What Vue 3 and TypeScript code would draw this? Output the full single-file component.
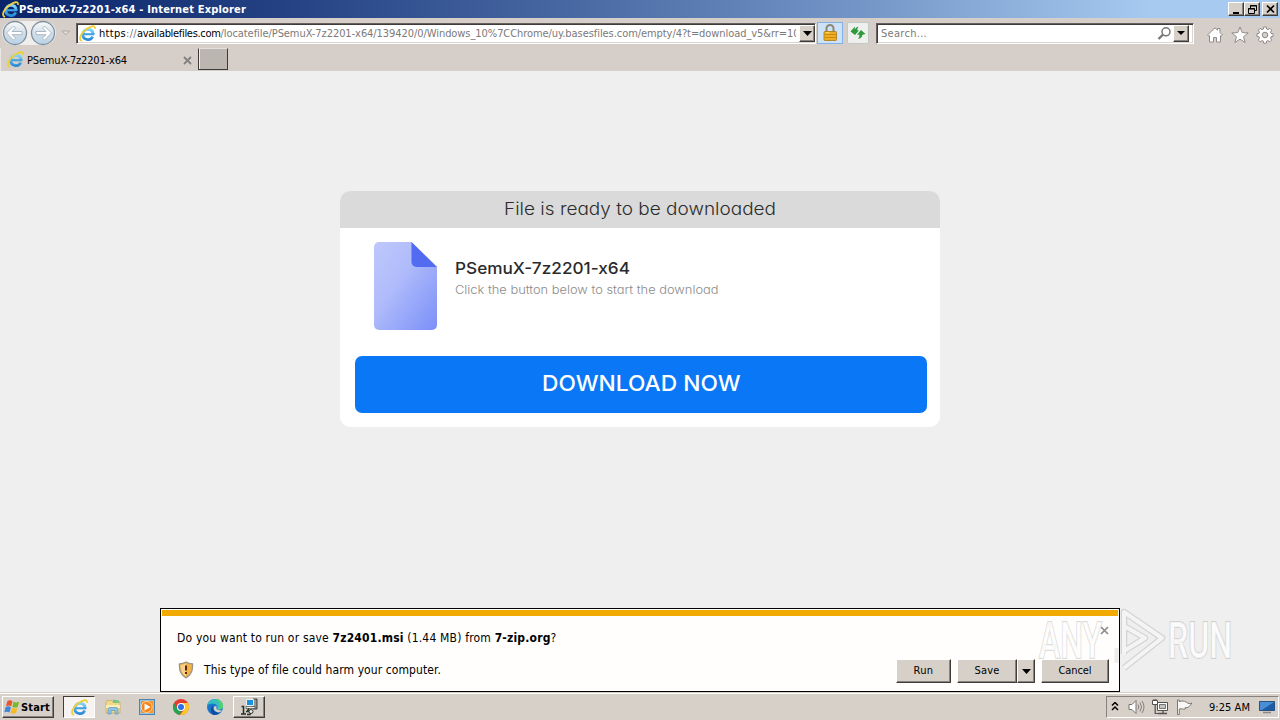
<script setup lang="ts">
import { ref, type Directive } from 'vue'

// Makes a label occupy the given width in pixels, by spreading its letters
// or, with the "wide" modifier, by stretching the letters themselves.
const vFit: Directive<HTMLElement, number, 'wide'> = {
  mounted(el, { value, modifiers }) {
    const count = (el.textContent ?? '').length
    const natural = el.getBoundingClientRect().width
    if (modifiers.wide) {
      el.style.transform = `scaleX(${value / natural})`
      el.style.marginRight = `${value - natural}px`
    } else {
      el.style.letterSpacing = `${(value - natural) / count}px`
    }
  },
}

const fileName = ref('PSemuX-7z2201-x64')
const search = ref('Search...')
const clock = ref('9:25 AM')
</script>

<template>
  <div class="screen">
    <svg class="defs" width="0" height="0">
      <defs>
        <linearGradient id="ieBlue" x1="0" y1="0" x2="0" y2="1">
          <stop offset="0" stop-color="#7fd6fa" />
          <stop offset="1" stop-color="#2a8bd8" />
        </linearGradient>
        <linearGradient id="sheet" x1="0" y1="0" x2="1" y2="1">
          <stop offset="0" stop-color="#bfc8fc" />
          <stop offset="0.4" stop-color="#b0bcfb" />
          <stop offset="1" stop-color="#7b8ff8" />
        </linearGradient>
        <linearGradient id="orb" x1="0" y1="0" x2="0" y2="1">
          <stop offset="0" stop-color="#fafcfd" />
          <stop offset="0.5" stop-color="#d5dee6" />
          <stop offset="1" stop-color="#b9d3e8" />
        </linearGradient>
        <symbol id="ie" viewBox="0 0 16 16">
          <path d="M12.900 10.800C11.800 13.200 9.900 14 8 13.700c-2.800-.4-4.600-2.400-4.400-5.100C3.800 5.800 6 4 8.400 4c2.900 0 4.700 1.900 4.900 4.600" fill="none" stroke="url(#ieBlue)" stroke-width="2.600" />
          <path d="M4 8.700h10.500" stroke="#3fa3e6" stroke-width="2" />
          <path d="M2.900 14.900C-1 14 1.500 7.500 7.200 3.700 11 1.100 15.600-.4 15 3.600" fill="none" stroke="#efcf3c" stroke-width="1.700" />
        </symbol>
      </defs>
    </svg>

    <header class="titlebar">
      <svg class="i16" viewBox="0 0 16 16"><use href="#ie" /></svg>
      <b><span v-fit="227">{{ fileName }} - Internet Explorer</span></b>
      <div class="winbtns">
        <i class="raised"><svg width="13" height="11"><path d="M3 9h6" stroke="#000" stroke-width="2" /></svg></i>
        <i class="raised"><svg width="13" height="11"><path d="M4.500 4V1.500h6v5H9M4 2h7M2.500 4.500h6v5h-6zM2 5h7" fill="none" stroke="#000" /></svg></i>
        <i class="raised close"><svg width="13" height="11"><path d="M3 1.500l7 7M10 1.500l-7 7" stroke="#000" stroke-width="1.700" /></svg></i>
      </div>
    </header>

    <nav class="toolbar">
      <svg class="nav" width="72" height="28" viewBox="0 0 72 28">
        <rect x="2" y="2" width="54" height="24" rx="12" fill="#efeeed" />
        <g stroke="#7f91a0" stroke-width="1.300" fill="url(#orb)">
          <circle cx="15" cy="14" r="11.500" /><circle cx="43" cy="14" r="11.500" />
        </g>
        <g fill="#fff" stroke="#9fb3c2" stroke-width=".9">
          <path d="M6.500 14l7-7 2 2-3.500 3.500H22v3.200H12l3.500 3.500-2 2z" />
          <path d="M51.500 14l-7-7-2 2 3.500 3.500H36v3.200h10l-3.500 3.500 2 2z" />
        </g>
        <path d="M62 12h7.500L65.700 16z" fill="#dedbd8" stroke="#aaa6a2" stroke-width=".9" />
      </svg>
      <div class="field address">
        <svg class="i16" viewBox="0 0 16 16"><use href="#ie" /></svg>
        <div class="url"><span v-fit="38" class="dk">https<em>://</em></span><span v-fit="83.5" class="dk">availablefiles.com</span><span v-fit="579">/locatefile/{{ fileName }}/139420/0/Windows_10%7CChrome/uy.basesfiles.com/empty/4?t=download_v5&amp;rr=10</span></div>
        <i class="raised drop"><svg width="9" height="5"><path d="M0 0h9L4.500 5z" /></svg></i>
      </div>
      <div class="lock">
        <svg width="16" height="18" viewBox="0 0 16 18">
          <path d="M4.500 8V4.500a3.500 3.500 0 0 1 7 0V8" fill="none" stroke="#8d8873" stroke-width="2" />
          <rect x="2" y="7.500" width="12.500" height="9" rx=".8" fill="#eeae1f" stroke="#a87713" stroke-width=".8" />
          <path d="M3 10.500h11M3 13.500h11" stroke="#c98b13" /><path d="M3.500 8.700h4" stroke="#fbdc7b" />
        </svg>
      </div>
      <div class="refresh">
        <svg width="16" height="14" viewBox="0 0 16 14" fill="#2c9a3d">
          <path d="M.5 5.500L5 .500 4.700 3.500C5.500 2.500 6.500 1 8.500.8 7.300 2 7.300 3.500 7.500 4.500H9L5 9z" />
          <path d="M15.500 8L11 4 7 8.800h2.300c.2 1.500 0 2.700-1.300 4.200 2.500-.3 4-1.700 4.500-4.200z" />
        </svg>
      </div>
      <div class="field search">
        <span v-fit="46">{{ search }}</span>
        <svg width="15" height="15" viewBox="0 0 15 15"><circle cx="9" cy="5.800" r="4" fill="none" stroke="#777" stroke-width="1.500" /><path d="M6 8.700L1.500 13" stroke="#777" stroke-width="2.300" /></svg>
        <i class="raised drop"><svg width="8" height="4"><path d="M0 0h8L4 4z" /></svg></i>
      </div>
      <div class="tools">
        <svg width="18" height="18" viewBox="0 0 18 18"><path d="M1.500 9L9 1.800l2.500 2.300V2.500H14v4L16.500 9l-1.300 1.200-.7-.6V16h-4v-4.500h-3V16h-4V9.600l-.7.6z" /></svg>
        <svg width="18" height="18" viewBox="0 0 18 18"><path d="M9 1l2.200 5.600 6 .3-4.700 3.800 1.700 5.800L9 13.200l-5.200 3.300 1.700-5.800L.8 6.900l6-.3z" /></svg>
        <svg width="18" height="18" viewBox="0 0 18 18"><path fill-rule="evenodd" d="M7.700 1h2.600l.4 2.100 1.300.5 1.900-1.200 1.800 1.800-1.200 1.900.5 1.300 2.100.4v2.600l-2.100.4-.5 1.300 1.200 1.900-1.800 1.800-1.900-1.200-1.300.5-.4 2.100H7.700l-.4-2.100-1.300-.5-1.900 1.200L2.300 14l1.200-1.900-.5-1.300-2.100-.4V7.800L3 7.400l.5-1.300-1.200-1.900 1.800-1.800L6 3.600l1.300-.5zM9 6.200a2.800 2.800 0 1 0 0 5.600 2.800 2.800 0 0 0 0-5.600z" /></svg>
      </div>
    </nav>

    <div class="tabs">
      <div class="tab">
        <svg class="i16" viewBox="0 0 16 16"><use href="#ie" /></svg>
        <span v-fit="100">{{ fileName }}</span>
        <svg class="x" width="9" height="9"><path d="M1 1l7 7M8 1L1 8" stroke="#858180" stroke-width="1.800" /></svg>
      </div>
      <i class="newtab"></i>
    </div>

    <main class="page">
      <section class="card">
        <h1><span v-fit.wide="272">File is ready to be downloaded</span></h1>
        <div class="file">
          <svg width="63" height="88" viewBox="0 0 63 88">
            <path d="M5 0h32.500L63 25v58a5 5 0 0 1-5 5H5a5 5 0 0 1-5-5V5a5 5 0 0 1 5-5z" fill="url(#sheet)" />
            <path d="M37.500 0L63 25H42.500a5 5 0 0 1-5-5z" fill="#526bf1" />
          </svg>
          <div class="info">
            <h2><span v-fit.wide="175">{{ fileName }}</span></h2>
            <p><span v-fit.wide="263.5">Click the button below to start the download</span></p>
          </div>
        </div>
        <button class="download"><span v-fit.wide="198.5">DOWNLOAD NOW</span></button>
      </section>
    </main>

    <aside class="notice">
      <div class="stripe"></div>
      <svg class="x dismiss" width="9" height="9"><path d="M1 1l7 7M8 1L1 8" stroke="#8c8a88" stroke-width="1.700" /></svg>
      <p class="ask"><span v-fit="379.5">Do you want to run or save <b>7z2401.msi</b> (1.44 MB) from <b>7-zip.org</b>?</span></p>
      <div class="warn">
        <svg width="16" height="18" viewBox="0 0 16 18">
          <path d="M8 1c2 1.300 4 1.800 6.500 1.800C15 9 13.500 14 8 16.800 2.500 14 1 9 1.500 2.800 4 2.800 6 2.300 8 1z" fill="#f0b34a" stroke="#9c9488" stroke-width="1.300" />
          <path d="M8 2.500v13C4 13 2.600 9 2.700 4 5 3.900 6.500 3.400 8 2.500z" fill="#f7d08b" />
          <path d="M8 4.500v5M8 11v2" stroke="#5d2410" stroke-width="2" />
        </svg>
        <span v-fit="237">This type of file could harm your computer.</span>
        <div class="actions">
          <button class="raised run"><span v-fit="20">Run</span></button>
          <button class="raised save"><span v-fit="25">Save</span></button>
          <button class="raised more"><svg width="9" height="5"><path d="M0 0h9L4.500 5z" /></svg></button>
          <button class="raised cancel"><span v-fit="33">Cancel</span></button>
        </div>
      </div>
    </aside>

    <svg class="watermark" width="204" height="68" viewBox="0 0 204 68">
      <g font-family="Roboto, sans-serif" font-weight="500" font-size="50" fill="#fff" fill-opacity=".75" stroke="#888" stroke-opacity=".3" stroke-width="2" paint-order="stroke">
        <text x="5" y="54" textLength="63" lengthAdjust="spacingAndGlyphs">ANY</text>
        <text x="134" y="54" textLength="64" lengthAdjust="spacingAndGlyphs">RUN</text>
      </g>
      <g fill="none" stroke-linejoin="round">
        <path d="M90 50V8l38 26-38 30M90 22l21 12-21 13" stroke="#888" stroke-opacity=".26" stroke-width="6.500" />
        <path d="M90 50V8l38 26-38 30M90 22l21 12-21 13" stroke="#fff" stroke-opacity=".75" stroke-width="4" />
        <path d="M82.500 44v15" stroke="#888" stroke-opacity=".15" stroke-width="4" />
      </g>
    </svg>

    <footer class="taskbar">
      <div class="raised start">
        <svg width="17" height="16" viewBox="0 0 17 16">
          <path d="M3.500 2c2-1 3.500-.8 5 .2L7.200 7.300C5.500 6.300 4 6.300 2 7z" fill="#e8552b" />
          <path d="M9.500 2.700c1.800 1 3.500 1 5.700 0l-1.500 5.200c-2 1-3.600.8-5.300-.2z" fill="#79b829" />
          <path d="M1.700 8c2-1 3.500-.8 5.200.3l-1.400 5.200c-1.600-1-3.300-1-5.200-.3z" fill="#3e87dc" />
          <path d="M8 8.800c1.700 1 3.500 1 5.400.1L12 14c-2 1-3.700.8-5.400-.2z" fill="#f6bc24" />
        </svg>
        <b><span v-fit="29">Start</span></b>
      </div>
      <div class="task active"><svg class="i16" viewBox="0 0 16 16"><use href="#ie" /></svg></div>
      <div class="quick">
        <svg width="18" height="18" viewBox="0 0 18 18"><path d="M2 4l1-1.500h4.500L9 4h7v11H2z" fill="#f0d98a" stroke="#c8a850" stroke-width=".7" /><path d="M9 1.500l6 1V5H9z" fill="#7ec480" /><path d="M2 7h14v3H2z" fill="#fbedb5" /><path d="M4 16v-4.500a2 2 0 0 1 2-2h6a2 2 0 0 1 2 2V16h-3v-3.500H7V16z" fill="#8ec3e6" stroke="#6295b7" stroke-width=".7" /></svg>
        <svg width="18" height="18" viewBox="0 0 18 18"><rect x="1.500" y="1.500" width="15" height="15" fill="#9bc2df" stroke="#4d83ac" /><rect x="3" y="3" width="12" height="12" fill="#f6962a" /><circle cx="8.700" cy="9" r="5.500" fill="#f5841b" stroke="#fcd49c" /><path d="M6.500 5.500l6 3.500-6 3.500z" fill="#fff" /></svg>
        <svg width="18" height="18" viewBox="0 0 18 18"><circle cx="9" cy="9" r="8" fill="#e33b2e" /><path d="M2 5l3.500 6 3.500 2-1 4A8 8 0 0 1 2 5z" fill="#23a455" /><path d="M9 5h7a8 8 0 0 1-8 12l4.500-6z" fill="#fcc72c" /><circle cx="9" cy="9" r="4" fill="#fff" /><circle cx="9" cy="9" r="3" fill="#2b70e4" /></svg>
        <svg width="18" height="18" viewBox="0 0 18 18"><circle cx="9" cy="9" r="8" fill="#1976cc" /><path d="M1.200 8C2 3.500 5 1 9 1c5 0 8 3.500 8 7 0 3-3 4.500-6.500 3 1-1 1-2.200.5-3.300C9.500 5 4 4.500 1.200 8z" fill="#35bfc0" /><path d="M10 1c4.500.3 7 3.500 7 7 0 2.500-2.200 4-5 3.400 3-3.400 2-7.400-2-10.400z" fill="#56cf6f" /><path d="M7.500 7.500C5.500 11 8 15 14.500 14.200A8 8 0 0 1 7 16.700C4 14 4 9.500 7.500 7.500z" fill="#114f9e" /><path d="M10.500 9.500c-.8 1.500 1 3.300 5.500 2.800l-2 2C10 15 6.500 12 8.300 8.600 9.800 7.800 11 8.500 10.500 9.500z" fill="#d6d0cb" /></svg>
      </div>
      <div class="raised task installer">
        <svg width="18" height="18" viewBox="0 0 18 18"><path d="M13 1h4v10h-4z" fill="#8f9694" stroke="#222" stroke-width=".8" /><path d="M6.500 1.500h7v6h-7z" fill="#1d91dc" stroke="#e7f2f4" /><path d="M6 8.500h9v2H6z" fill="#eee" stroke="#333" stroke-width=".6" /><path d="M1.500 8.500h2v7M1 16h5M9 10.500l-2 3h4l-1 3H7" fill="none" stroke="#23301f" stroke-width="1.500" /><circle cx="11" cy="13.500" r="2" fill="#e9eee5" stroke="#333" /></svg>
      </div>
      <div class="tray">
        <svg width="8" height="10" viewBox="0 0 8 10"><path d="M1 3.500l3-3 3 3M1 8l3-3 3 3" fill="none" stroke="#000" stroke-width="1.500" /></svg>
        <svg class="spk" width="17" height="16" viewBox="0 0 17 16"><path d="M1 5.500h3L8 1.500v13l-4-4H1z" fill="#fff" stroke="#77736f" /><path d="M10 5.500q1.500 2.500 0 5M12 3.500q3 4.500 0 9M14 2q4 6 0 12" fill="none" stroke="#85817d" /></svg>
        <svg class="net" width="17" height="16" viewBox="0 0 17 16"><path d="M5.500 3.500h10v8h-10z" fill="#fff" stroke="#55514e" /><path d="M7.500 5.500h6v4h-6z" fill="#c4c4c2" stroke="#77736f" /><path d="M6 14.500h9M11 12v2" stroke="#55514e" stroke-width="1.300" /><path d="M.5 1.500h5v4h-5z" fill="#fff" stroke="#55514e" /><path d="M2 0v2M4 0v2M3.200 6v8.500H7" fill="none" stroke="#55514e" stroke-width="1.200" /></svg>
        <svg class="flag" width="17" height="16" viewBox="0 0 17 16"><path d="M1.500 1v14.500h1.800V10c2.500-1 4 .8 6 0V8.500c2.500.7 4.500-1 6.500-4.500-2 1-3.500.7-5.500-.8C8 1.500 6 2 3.300 2.500V1z" fill="#f8f7f5" stroke="#706c68" stroke-width=".9" /></svg>
        <span v-fit="41">{{ clock }}</span>
        <svg class="desk" width="16" height="14" viewBox="0 0 16 14"><path d="M.5 1.500h15v9H.5z" fill="#1d5ca6" stroke="#27517f" /><path d="M1 2h14L3 10H1z" fill="#4a8fd3" /><path d="M4 12.500h8" stroke="#888" stroke-width="1.500" /></svg>
      </div>
    </footer>
  </div>
</template>

<style>
body { margin: 0; overflow: hidden; }
</style>

<style scoped>
.screen {
  position: relative;
  width: 1280px;
  height: 720px;
  overflow: hidden;
  display: flex;
  flex-direction: column;
  background: #efefef;
  color: #000;
  font: 11px/14px "DejaVu Sans Condensed", "DejaVu Sans", sans-serif;
}
.screen * { box-sizing: border-box; }
.defs { position: absolute; }
svg { display: block; flex: none; }
span { display: inline-block; white-space: nowrap; transform-origin: left; }
p, h1, h2 { margin: 0; }
.i16 { width: 17px; height: 17px; }
button { font: inherit; padding: 0; color: #000; }
.raised {
  display: flex;
  align-items: center;
  justify-content: center;
  background: #d6d0c9;
  border: 1px solid;
  border-color: #fff #403c3a #403c3a #fff;
  box-shadow: inset -1px -1px #88827e;
}
.titlebar {
  height: 18px;
  flex: none;
  display: flex;
  align-items: center;
  padding: 0 2px;
  background: linear-gradient(90deg, #0a246a, #244283 22%, #4767a2 44%, #7597c8 68%, #a6caf0 90%);
  color: #fff;
}
.titlebar b { padding-top: 2px; }
.winbtns { margin-left: auto; display: flex; }
.winbtns .raised { width: 16px; height: 14px; }
.winbtns .close { margin-left: 2px; }
.toolbar {
  height: 30px;
  flex: none;
  display: flex;
  align-items: center;
  background: #d6cec8;
}
.nav { margin-right: 4px; }
.field {
  height: 21px;
  display: flex;
  align-items: center;
  background: #fff;
  border: 1px solid;
  border-color: #68605e #fff #fff #68605e;
  box-shadow: inset 1px 1px #413c3c, inset -1px -1px #dcd4ce;
  color: #7c7979;
}
.address { width: 740px; padding-left: 2px; }
.url { width: 697px; margin-left: 3px; padding-top: 2px; overflow: hidden; white-space: nowrap; flex: none; }
.url .dk { color: #000; }
.url em { font-style: normal; color: #777; }
.drop { height: 17px; width: 16px; margin-left: 3px; flex: none; }
.lock { width: 26px; height: 22px; margin-left: 1px; display: flex; align-items: center; justify-content: center; background: #cde1f7; border: 1px solid #82b1e7; }
.refresh { width: 22px; height: 22px; margin: 0 7px 0 4px; display: flex; align-items: center; justify-content: center; background: #eff0ed; border: 1px solid #c3cac6; border-radius: 2px; }
.search { width: 318px; padding: 0 4px 0 4px; }
.search > span { padding-top: 2px; }
.search > svg { margin-left: auto; }
.search .drop { margin-left: 1px; }
.tools { display: flex; gap: 7px; margin: 4px 0 0 11.5px; }
.tools svg { fill: #fff; stroke: #908b88; stroke-width: 1; }
.tabs { height: 23px; flex: none; display: flex; background: #d6cec8; }
.tab { width: 198px; height: 23px; padding: 0 6px 0 6px; display: flex; align-items: center; border-left: 1px solid #eae6e2; }
.tab span { margin-left: 3px; padding-top: 2px; }
.tab .x { margin-left: auto; margin-top: 1px; }
.newtab { width: 30px; height: 22px; background: #bcb6b0; border: 1px solid #3e3a38; border-top-color: #e5e0dc; box-shadow: inset 1px 0 #eee; }
.page { flex: 1; display: flex; justify-content: center; align-items: flex-start; padding-top: 120px; font-family: Inter, sans-serif; font-feature-settings: "cv11"; }
.card { width: 600px; height: 236px; background: #fff; border-radius: 10px; overflow: hidden; }
.card h1 { height: 37px; background: #dadada; text-align: center; font-size: 17.5px; line-height: 36px; font-weight: 300; color: #2c2c2c; }
.file { display: flex; padding: 14px 0 0 33.5px; }
.info { padding: 14px 0 0 18.5px; }
.info h2 { font-size: 16.5px; line-height: 24px; font-weight: 500; color: #2a2a2a; }
.info p { font-size: 12px; line-height: 20px; font-weight: 300; color: #8b8b8b; }
.download { display: block; width: 572px; height: 57px; margin: 26px 0 0 15px; border: 0; border-radius: 7px; background: #0a77f6; color: #fff; font-size: 22px; line-height: 54px; font-weight: 500; font-feature-settings: inherit; }
.download span { position: relative; top: -2px; }
.notice { position: absolute; left: 160px; top: 608px; width: 960px; height: 84px; background: #fffefc; border: 1px solid #000; padding: 1px; font-size: 12px; line-height: 16px; }
.stripe { height: 6px; background: #f1ab00; }
.dismiss { position: absolute; right: 10px; top: 17px; }
.ask { padding: 14px 0 0 15px; height: 30px; }
.warn { display: flex; align-items: center; padding: 11px 9px 0 16px; }
.warn > span { margin-left: 10px; }
.actions { display: flex; margin: 2px 0 0 auto; font-size: 11px; }
.actions button { height: 24px; }
.run { width: 55px; margin-right: 6px; }
.save { width: 60px; }
.more { width: 18px; margin-right: 6px; }
.cancel { width: 68px; }
.watermark { position: absolute; left: 1034px; top: 604px; overflow: visible; }
.taskbar { height: 28px; flex: none; display: flex; align-items: center; padding: 1px 1px 0 2px; background: #d6d0c9; border-top: 1px solid #d6d0c9; box-shadow: inset 0 1px #fff; }
.start { width: 52px; height: 22px; padding-right: 2px; }
.start b { padding-top: 1px; }
.task { width: 32px; height: 22px; display: flex; align-items: center; justify-content: center; }
.active { margin-left: 9px; background: #f6f3f0; border: 1px solid; border-color: #403c3a #fff #fff #403c3a; }
.quick { display: flex; gap: 16px; margin: 0 9px; }
.tray { width: 173px; height: 22px; margin-left: auto; display: flex; align-items: center; padding-left: 4px; border: 1px solid; border-color: #88827e #fff #fff #88827e; }
.spk { margin-left: 9px; }
.net { margin-left: 7px; }
.flag { margin-left: 7px; }
.tray span { margin-left: 16px; padding-top: 1px; }
.desk { margin-left: 9px; }
</style>
